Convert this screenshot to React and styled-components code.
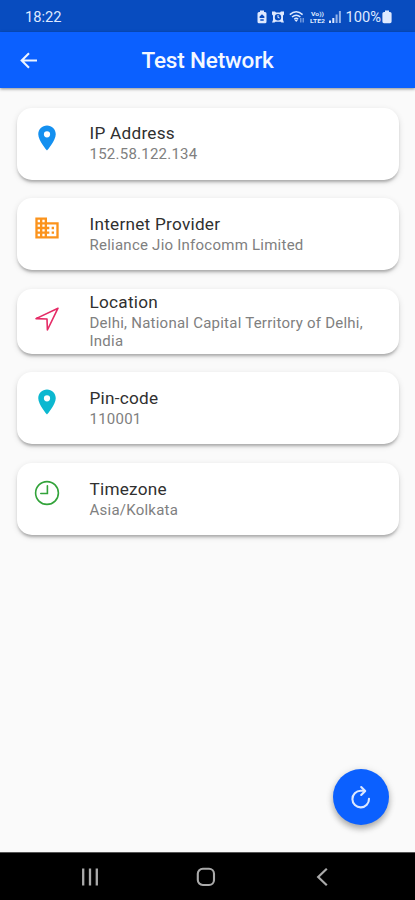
import React from 'react';
import styled, { createGlobalStyle } from 'styled-components';

const GlobalStyle = createGlobalStyle`
  * {
    box-sizing: border-box;
  }

  body {
    margin: 0;
    background: #fafafa;
    font-family: Roboto, sans-serif;
  }
`;

const Screen = styled.div`
  display: flex;
  flex-direction: column;
  width: 415px;
  height: 900px;
  overflow: hidden;
  background: #fafafa;
`;

const StatusBar = styled.div`
  display: flex;
  align-items: center;
  justify-content: space-between;
  height: 32px;
  flex-shrink: 0;
  padding: 1px 23px 0 25px;
  background: #084cbf;
  color: #dfe9ff;
  font-size: 14.7px;
`;

const StatusIcons = styled.div`
  display: flex;
  align-items: center;
`;

const StatusIcon = styled.svg`
  display: block;
  margin-right: ${({ $gap = 0 }) => $gap}px;
`;

const Battery = styled.span`
  margin-right: 1px;
  font-size: 14.7px;
`;

const AppBar = styled.header`
  display: grid;
  grid-template-columns: 58px 1fr 58px;
  align-items: center;
  height: 56px;
  flex-shrink: 0;
  background: #0b60ff;
  box-shadow: 0 1px 3px rgba(0, 0, 0, 0.45);
`;

const BackButton = styled.button`
  display: flex;
  justify-content: center;
  padding: 0;
  border: 0;
  background: none;
  color: #eef4ff;
`;

const Title = styled.h1`
  margin: 0;
  color: #f4f8ff;
  font-size: 22.5px;
  font-weight: 500;
  letter-spacing: -0.15px;
  line-height: 28px;
  text-align: center;
`;

const List = styled.main`
  display: flex;
  flex: 1;
  flex-direction: column;
  gap: 18.6px;
  padding: 19.5px 16px 0 17px;
`;

const Card = styled.section`
  display: flex;
  height: ${({ $tall }) => ($tall ? 65.2 : 72)}px;
  padding-left: 15px;
  border-radius: 15px;
  background: #fff;
  box-shadow: 0 3px 3px -1px rgba(0, 0, 0, 0.26), 0 2px 6px rgba(0, 0, 0, 0.12);
`;

const CardIcon = styled.div`
  display: flex;
  align-items: center;
  justify-content: center;
  width: 30px;
  height: 60px;
  margin-right: 27.5px;
  color: ${({ $color }) => $color};
`;

const CardText = styled.div`
  display: flex;
  flex: 1;
  flex-direction: column;
  padding-top: ${({ $tall }) => ($tall ? 3 : 15.5)}px;
`;

const Label = styled.div`
  color: #303030;
  font-size: 17.2px;
  letter-spacing: 0.25px;
  line-height: 21px;
`;

const Value = styled.div`
  max-width: 290px;
  color: #808080;
  font-size: 15px;
  letter-spacing: 0.24px;
  line-height: 18.4px;
  padding-top: 1px;
`;

const FabRow = styled.div`
  display: flex;
  justify-content: flex-end;
  flex-shrink: 0;
  padding: 0 26px 27px 0;
`;

const Fab = styled.button`
  display: flex;
  align-items: center;
  justify-content: center;
  width: 56px;
  height: 56px;
  padding: 0;
  border: 0;
  border-radius: 50%;
  background: #0b60ff;
  color: #dce8ff;
  box-shadow: 0 4px 6px rgba(0, 0, 0, 0.28), 0 1px 8px rgba(0, 0, 0, 0.1);
`;

const NavBar = styled.nav`
  display: flex;
  align-items: center;
  justify-content: space-between;
  height: 48px;
  flex-shrink: 0;
  padding: 1px 82px 0 79px;
  border-top: 1px solid #555;
  background: #000;
  color: #aaa;
`;

const PinIcon = () => (
  <svg width="30" height="30" viewBox="0 0 24 24" fill="currentColor">
    <path d="M12 2C8.13 2 5 5.13 5 9c0 5.25 7 13 7 13s7-7.75 7-13c0-3.87-3.13-7-7-7zm0 9.5a2.5 2.5 0 0 1 0-5 2.5 2.5 0 0 1 0 5z" />
  </svg>
);

const BusinessIcon = () => (
  <svg width="28" height="28" viewBox="0 0 24 24" fill="currentColor">
    <path d="M12 7V3H2v18h20V7H12zM6 19H4v-2h2v2zm0-4H4v-2h2v2zm0-4H4V9h2v2zm0-4H4V5h2v2zm4 12H8v-2h2v2zm0-4H8v-2h2v2zm0-4H8V9h2v2zm0-4H8V5h2v2zm10 12h-8v-2h2v-2h-2v-2h2v-2h-2V9h8v10zm-2-8h-2v2h2v-2zm0 4h-2v2h2v-2z" />
  </svg>
);

const LocationIcon = () => (
  <svg width="28" height="28" viewBox="0 0 28 28" fill="none" stroke="currentColor" strokeWidth="1.6" strokeLinejoin="round">
    <path d="M25 3.2 3 13.6l11 .4.4 11z" />
  </svg>
);

const ClockIcon = () => (
  <svg width="28" height="28" viewBox="0 0 28 28" fill="none" stroke="currentColor" strokeWidth="1.6" strokeLinecap="round">
    <circle cx="14" cy="14" r="11.4" />
    <path d="M14.4 6.8v7.7H7.8" />
  </svg>
);

const RefreshIcon = () => (
  <svg width="28" height="28" viewBox="0 0 28 28" fill="none" stroke="currentColor" strokeWidth="2.1" strokeLinecap="round" strokeLinejoin="round">
    <path d="M22 15.8a8.3 8.3 0 1 1-8.3-8h3.6" />
    <path d="m14.2 4 4 4-4 4" />
  </svg>
);

const rows = [
  { label: 'IP Address', value: '152.58.122.134', color: '#1490f0', Icon: PinIcon },
  { label: 'Internet Provider', value: 'Reliance Jio Infocomm Limited', color: '#fb931c', Icon: BusinessIcon },
  { label: 'Location', value: 'Delhi, National Capital Territory of Delhi, India', color: '#e52b66', Icon: LocationIcon, tall: true },
  { label: 'Pin-code', value: '110001', color: '#0cb8d0', Icon: PinIcon },
  { label: 'Timezone', value: 'Asia/Kolkata', color: '#32a33a', Icon: ClockIcon },
];

const StatusIconGroup = () => (
  <StatusIcons>
    <StatusIcon $gap={5} width="10" height="14" viewBox="0 0 10 14" fill="currentColor">
      <path fillRule="evenodd" d="M3 .5h4V2h1q1.5 0 1.5 1.5v8.2q0 1.5-1.5 1.5H2Q.5 13.2.5 11.7V3.5Q.5 2 2 2h1zM5 4.2 2.6 6.6V8h4.8V6.6zM3.3 9.2v1.6h3.4V9.2z" />
    </StatusIcon>
    <StatusIcon $gap={5} width="12" height="12" viewBox="0 0 12 12" fill="currentColor">
      <path fillRule="evenodd" d="M0 .5h3l1 1h4l1-1h3v3l-1 1V9l1 2.5H9.5l-1-.7h-5l-1 .7H0L1 9V4.5l-1-1zM6 3a3.2 3.2 0 1 0 0 6.4A3.2 3.2 0 0 0 6 3zm-.5 1h1v2l1.3.8-.6.8-1.7-1.1z" />
    </StatusIcon>
    <StatusIcon $gap={5} width="16" height="14" viewBox="0 0 16 14" fill="none" stroke="currentColor" strokeWidth="1.5">
      <path d="M.8 4.6q6.4-5.6 12.8 0M3 7q4.2-3.6 8.4 0M5.2 9.2q2-1.7 4 0" />
      <path d="m7.2 12-1.7-2h3.4z" fill="currentColor" stroke="none" />
      <path d="M11.8 8v4.5M14.2 8v4.5" strokeWidth="1.2" opacity=".6" />
    </StatusIcon>
    <StatusIcon $gap={3} width="16" height="14" viewBox="0 0 16 14" fill="currentColor">
      <text x="1" y="6.3" fontSize="6" fontWeight="700" textLength="13" lengthAdjust="spacingAndGlyphs">Vo))</text>
      <text x="0" y="13.4" fontSize="6" fontWeight="700" textLength="15" lengthAdjust="spacingAndGlyphs">LTE2</text>
    </StatusIcon>
    <StatusIcon $gap={4} width="12" height="12" viewBox="0 0 12 12" fill="currentColor">
      <path d="M0 9.5h2V12H0zM3.3 7h2v5h-2z" />
      <path d="M6.6 3.5h2V12h-2zM9.9 0h2v12h-2z" opacity=".65" />
    </StatusIcon>
    <Battery>100%</Battery>
    <StatusIcon width="10" height="14" viewBox="0 0 10 14" fill="currentColor">
      <path d="M3 .5h4V2h1q1.6 0 1.6 1.6v8q0 1.6-1.6 1.6H2Q.4 13.2.4 11.6v-8Q.4 2 2 2h1z" />
    </StatusIcon>
  </StatusIcons>
);

const App = () => (
  <>
    <GlobalStyle />
    <Screen>
      <StatusBar>
        <span>18:22</span>
        <StatusIconGroup />
      </StatusBar>
      <AppBar>
        <BackButton aria-label="Back">
          <svg width="24" height="24" viewBox="0 0 24 24" fill="none" stroke="currentColor" strokeWidth="2.1">
            <path d="M20 12.5H5.2M12 5.2l-7.3 7.3 7.3 7.3" />
          </svg>
        </BackButton>
        <Title>Test Network</Title>
      </AppBar>
      <List>
        {rows.map(({ label, value, color, Icon, tall }) => (
          <Card key={label} $tall={tall}>
            <CardIcon $color={color}>
              <Icon />
            </CardIcon>
            <CardText $tall={tall}>
              <Label>{label}</Label>
              <Value>{value}</Value>
            </CardText>
          </Card>
        ))}
      </List>
      <FabRow>
        <Fab aria-label="Refresh">
          <RefreshIcon />
        </Fab>
      </FabRow>
      <NavBar>
        <svg width="22" height="22" viewBox="0 0 22 22" fill="none" stroke="currentColor" strokeWidth="2.3">
          <path d="M4.2 2.5v17M11 2.5v17M17.8 2.5v17" />
        </svg>
        <svg width="22" height="22" viewBox="0 0 22 22" fill="none" stroke="currentColor" strokeWidth="2.1">
          <rect x="2.8" y="2.8" width="16.2" height="16.2" rx="5" />
        </svg>
        <svg width="22" height="22" viewBox="0 0 22 22" fill="none" stroke="currentColor" strokeWidth="2.2">
          <path d="M15.8 2.8 7.2 11l8.6 8.2" />
        </svg>
      </NavBar>
    </Screen>
  </>
);

export default App;
